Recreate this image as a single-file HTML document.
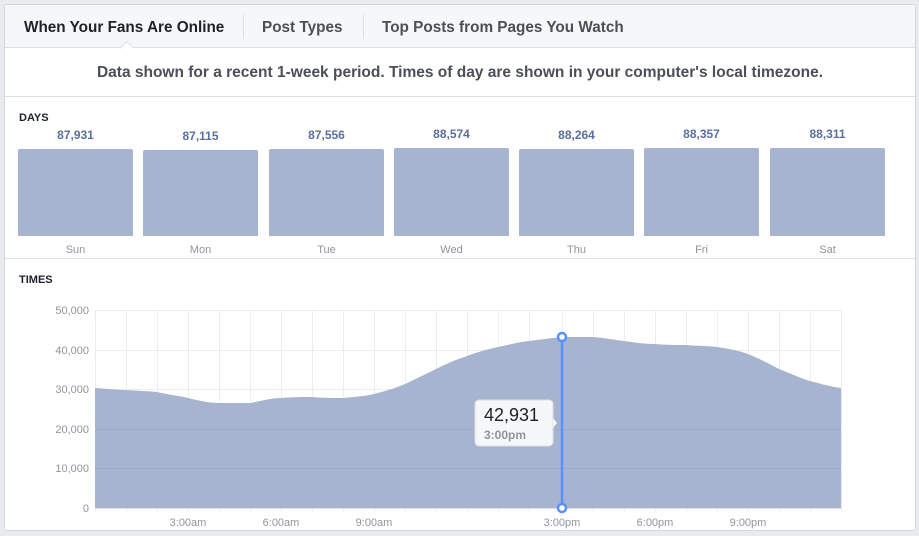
<!DOCTYPE html>
<html><head><meta charset="utf-8"><style>
*{margin:0;padding:0;box-sizing:border-box}
body{width:919px;height:536px;background:#e9ebee;font-family:"Liberation Sans",Arial,sans-serif;position:relative;overflow:hidden}
.card{position:absolute;left:4px;top:4px;width:912px;height:527px;background:#fff;border:1px solid #d3d6db;border-radius:3px;overflow:hidden}
.tabs{height:43px;background:#f6f7f9;border-bottom:1px solid #dddfe2;position:relative}
.tab{position:absolute;top:1px;height:43px;line-height:43px;font-size:15.3px;font-weight:bold;color:#4b4f56}
.sep{position:absolute;top:10px;width:1px;height:24px;background:#dddfe2}
.note{position:absolute;top:44px;left:0;width:910px;height:48px;line-height:48px;text-align:center;font-size:15.5px;font-weight:bold;color:#4b4f56}
.lbl{position:absolute;font-size:11px;font-weight:bold;color:#1d2129}
.bar{position:absolute;width:115px;background:#a7b4cf;border-radius:2px 2px 0 0}
.val{position:absolute;width:115px;text-align:center;font-size:12px;font-weight:bold;color:#5b6f9d}
.day{position:absolute;width:115px;text-align:center;font-size:11px;color:#90949c}
</style></head><body>
<div class="card">
<div class="tabs">
<div class="tab" style="left:19px;color:#1d2129">When Your Fans Are Online</div>
<div class="sep" style="left:238px"></div>
<div class="tab" style="left:257px">Post Types</div>
<div class="sep" style="left:358px"></div>
<div class="tab" style="left:377px">Top Posts from Pages You Watch</div>
<div style="position:absolute;left:117px;top:38px;width:10px;height:10px;background:#fff;border-left:1px solid #dddfe2;border-top:1px solid #dddfe2;transform:rotate(45deg)"></div>
</div>
<div class="note">Data shown for a recent 1-week period. Times of day are shown in your computer's local timezone.</div>
<div style="position:absolute;left:0;top:91px;width:910px;height:1px;background:#dddfe2"></div>
<div class="lbl" style="left:14px;top:107px">DAYS</div>
<div style="position:absolute;left:0;top:253px;width:910px;height:1px;background:#dddfe2"></div>
<div class="lbl" style="left:14px;top:269px">TIMES</div>
</div>
<div class="val" style="left:18px;top:128px">87,931</div><div class="bar" style="left:18px;top:149px;height:87px"></div><div class="day" style="left:18px;top:244px">Sun</div>
<div class="val" style="left:143px;top:129px">87,115</div><div class="bar" style="left:143px;top:150px;height:86px"></div><div class="day" style="left:143px;top:244px">Mon</div>
<div class="val" style="left:269px;top:128px">87,556</div><div class="bar" style="left:269px;top:149px;height:87px"></div><div class="day" style="left:269px;top:244px">Tue</div>
<div class="val" style="left:394px;top:127px">88,574</div><div class="bar" style="left:394px;top:148px;height:88px"></div><div class="day" style="left:394px;top:244px">Wed</div>
<div class="val" style="left:519px;top:128px">88,264</div><div class="bar" style="left:519px;top:149px;height:87px"></div><div class="day" style="left:519px;top:244px">Thu</div>
<div class="val" style="left:644px;top:127px">88,357</div><div class="bar" style="left:644px;top:148px;height:88px"></div><div class="day" style="left:644px;top:244px">Fri</div>
<div class="val" style="left:770px;top:127px">88,311</div><div class="bar" style="left:770px;top:148px;height:88px"></div><div class="day" style="left:770px;top:244px">Sat</div>
<svg style="position:absolute;left:0;top:0" width="919" height="536" font-family="Liberation Sans,Arial,sans-serif">
<g stroke="#ebedf0" stroke-width="1">
<line x1="95" y1="310.5" x2="842" y2="310.5"/><line x1="95" y1="350.5" x2="842" y2="350.5"/><line x1="95" y1="389.5" x2="842" y2="389.5"/><line x1="95" y1="429.5" x2="842" y2="429.5"/><line x1="95" y1="468.5" x2="842" y2="468.5"/>
</g>
<g stroke="#ebedf0">
<line x1="95.5" y1="310" x2="95.5" y2="512"/><line x1="126.5" y1="310" x2="126.5" y2="512"/><line x1="157.5" y1="310" x2="157.5" y2="512"/><line x1="188.5" y1="310" x2="188.5" y2="512"/><line x1="219.5" y1="310" x2="219.5" y2="512"/><line x1="250.5" y1="310" x2="250.5" y2="512"/><line x1="281.5" y1="310" x2="281.5" y2="512"/><line x1="312.5" y1="310" x2="312.5" y2="512"/><line x1="343.5" y1="310" x2="343.5" y2="512"/><line x1="374.5" y1="310" x2="374.5" y2="512"/><line x1="405.5" y1="310" x2="405.5" y2="512"/><line x1="436.5" y1="310" x2="436.5" y2="512"/><line x1="467.5" y1="310" x2="467.5" y2="512"/><line x1="498.5" y1="310" x2="498.5" y2="512"/><line x1="529.5" y1="310" x2="529.5" y2="512"/><line x1="562.5" y1="310" x2="562.5" y2="512"/><line x1="593.5" y1="310" x2="593.5" y2="512"/><line x1="624.5" y1="310" x2="624.5" y2="512"/><line x1="655.5" y1="310" x2="655.5" y2="512"/><line x1="686.5" y1="310" x2="686.5" y2="512"/><line x1="717.5" y1="310" x2="717.5" y2="512"/><line x1="748.5" y1="310" x2="748.5" y2="512"/><line x1="779.5" y1="310" x2="779.5" y2="512"/><line x1="810.5" y1="310" x2="810.5" y2="512"/><line x1="841.5" y1="310" x2="841.5" y2="512"/>
</g>
<path fill="#a7b4cf" d="M95,388 C110,389 120,390 126,390 C140,391 150,391 157,392 C170,395 180,396 188,398 C200,401 210,403 219,403 L250,403 C262,401 270,398 281,398 C295,397 305,397 312,397 C325,398 335,398 343,398 C355,397 365,396 374,394 C390,390 398,387 405,384 C420,377 428,373 436,369 C450,362 458,359 467,356 C480,351 490,349 498,347 C512,344 520,342 529,341 C545,339 552,338 562,337 L593,337 C605,338 615,340 624,341 C638,343 645,344 655,344 C668,345 676,345 686,345 C700,346 710,346 717,347 C730,349 740,351 748,354 C760,359 770,364 779,369 C792,374 800,378 810,381 C825,385 833,387 841,388 L841,508 L95,508 Z"/>
<g stroke="#98a5c0" stroke-width="1" opacity="0.6"><line x1="95" y1="429.5" x2="841" y2="429.5"/><line x1="95" y1="468.5" x2="841" y2="468.5"/></g>
<line x1="95" y1="508.5" x2="842" y2="508.5" stroke="#dddfe2"/>
<g font-size="11" fill="#90949c" text-anchor="end">
<text x="89" y="314">50,000</text><text x="89" y="354">40,000</text><text x="89" y="393">30,000</text><text x="89" y="433">20,000</text><text x="89" y="472">10,000</text><text x="89" y="512">0</text>
</g>
<g font-size="11" fill="#90949c" text-anchor="middle">
<text x="188" y="526">3:00am</text><text x="281" y="526">6:00am</text><text x="374" y="526">9:00am</text><text x="562" y="526">3:00pm</text><text x="655" y="526">6:00pm</text><text x="748" y="526">9:00pm</text>
</g>
<line x1="562" y1="337" x2="562" y2="508" stroke="#5890ff" stroke-width="2.5"/>
<circle cx="562" cy="337" r="4" fill="#fff" stroke="#5890ff" stroke-width="2.5"/>
<circle cx="562" cy="508" r="4" fill="#fff" stroke="#5890ff" stroke-width="2.5"/>
<rect x="475" y="400" width="78" height="46" rx="4" fill="#f6f7f9" stroke="#dddfe2"/>
<path d="M553,418 L557,423 L553,428 Z" fill="#f6f7f9"/>
<text x="484" y="421" font-size="18" fill="#1d2129">42,931</text>
<text x="484" y="439" font-size="12" font-weight="bold" fill="#90949c">3:00pm</text>
</svg>
</body></html>
